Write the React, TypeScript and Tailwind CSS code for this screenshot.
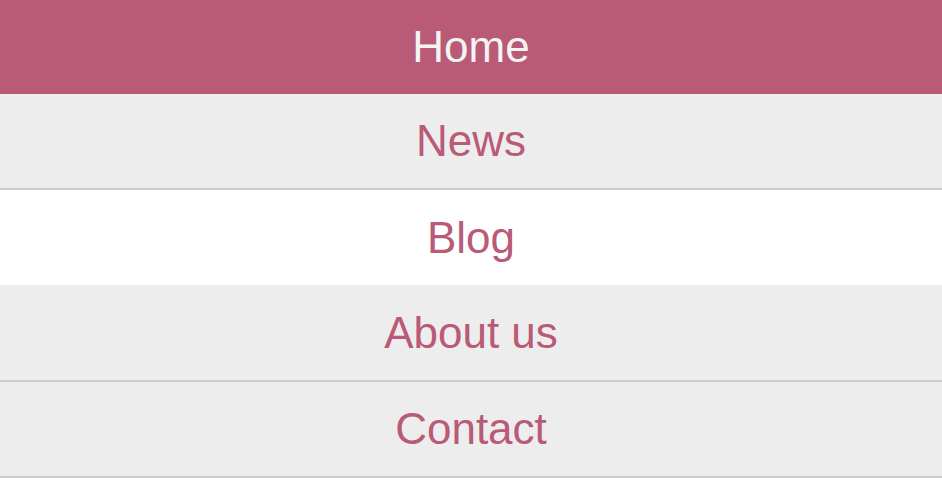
export default function App() {
  return (
    <nav className="w-full bg-white" style={{ fontFamily: '"Liberation Sans", Arial, sans-serif' }}>
      <ul className="flex flex-col text-[44px] leading-none">
        <li className="h-[94px] flex items-center justify-center bg-[#b95a76] text-[#f3f3f3]">Home</li>
        <li className="h-[96px] flex items-center justify-center bg-[#ededed] text-[#b95a76] border-b-2 border-[#cccccc]">News</li>
        <li className="h-[95px] flex items-center justify-center bg-white text-[#b95a76]">Blog</li>
        <li className="h-[97px] flex items-center justify-center bg-[#ededed] text-[#b95a76] border-b-2 border-[#cccccc]">About us</li>
        <li className="h-[96px] flex items-center justify-center bg-[#ededed] text-[#b95a76] border-b-2 border-[#cccccc]">Contact</li>
      </ul>
    </nav>
  );
}
